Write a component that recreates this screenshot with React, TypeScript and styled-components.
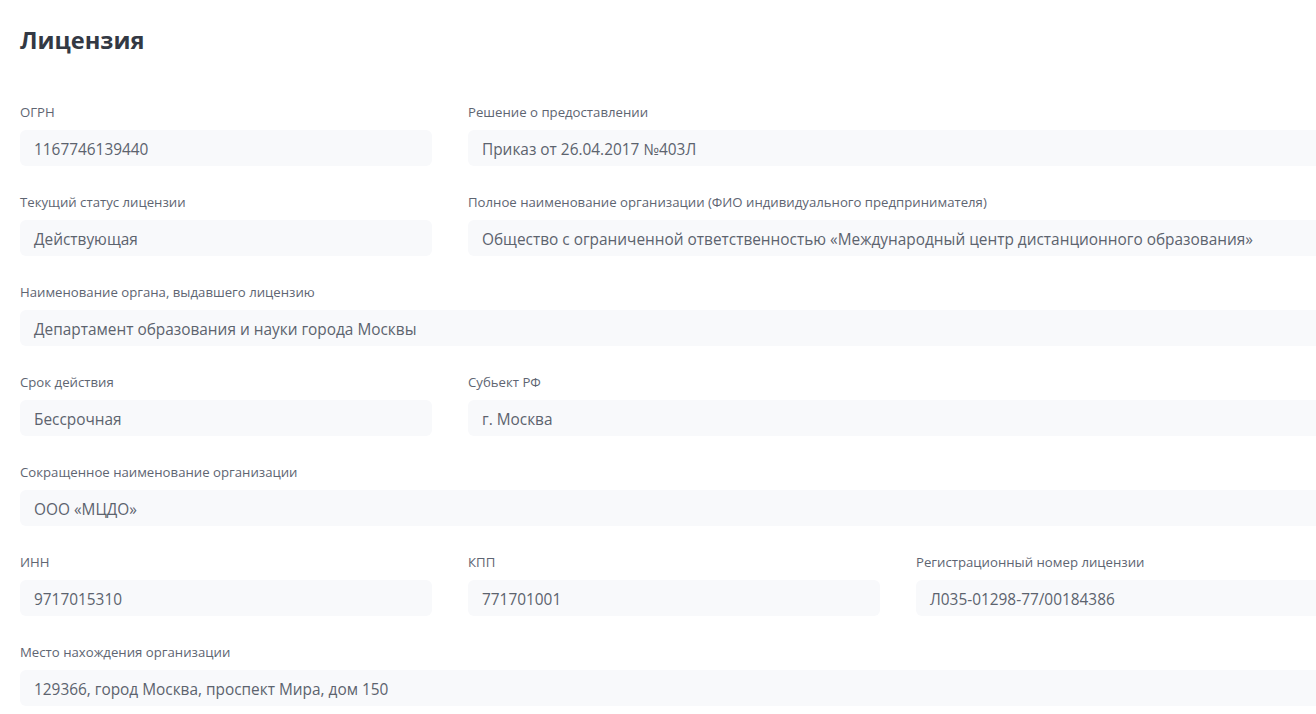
import React from "react";
import styled, { createGlobalStyle } from "styled-components";

const GlobalStyle = createGlobalStyle`
  html, body {
    margin: 0;
    padding: 0;
    background: #ffffff;
    overflow: hidden;
  }
  body {
    font-family: "Open Sans", "Noto Sans", "Liberation Sans", sans-serif;
  }
`;

const Page = styled.div`
  padding: 24px 0 0 20px;
  width: 1308px;
`;

const Title = styled.h1`
  margin: 0 0 47px;
  font-size: 23.6px;
  line-height: 32px;
  font-weight: 700;
  color: #333944;
`;

const Grid = styled.div`
  display: grid;
  grid-template-columns: repeat(3, 412px);
  column-gap: 36px;
  row-gap: 27px;
`;

const Field = styled.div<{ $span: number }>`
  grid-column: span ${(p) => p.$span};
  display: flex;
  flex-direction: column;
  gap: 9px;
`;

const Label = styled.label`
  font-size: 13.2px;
  line-height: 18px;
  color: #5e6572;
`;

const Value = styled.div`
  height: 36px;
  display: flex;
  align-items: center;
  padding: 2px 14px 0;
  box-sizing: border-box;
  border-radius: 6px;
  background: #f8f9fb;
  font-size: 15.4px;
  color: #5c636e;
  white-space: nowrap;
`;

type Item = { label: string; value: string; span: number };

const items: Item[] = [
  { label: "ОГРН", value: "1167746139440", span: 1 },
  { label: "Решение о предоставлении", value: "Приказ от 26.04.2017 №403Л", span: 2 },
  { label: "Текущий статус лицензии", value: "Действующая", span: 1 },
  {
    label: "Полное наименование организации (ФИО индивидуального предпринимателя)",
    value: "Общество с ограниченной ответственностью «Международный центр дистанционного образования»",
    span: 2,
  },
  { label: "Наименование органа, выдавшего лицензию", value: "Департамент образования и науки города Москвы", span: 3 },
  { label: "Срок действия", value: "Бессрочная", span: 1 },
  { label: "Субьект РФ", value: "г. Москва", span: 2 },
  { label: "Сокращенное наименование организации", value: "ООО «МЦДО»", span: 3 },
  { label: "ИНН", value: "9717015310", span: 1 },
  { label: "КПП", value: "771701001", span: 1 },
  { label: "Регистрационный номер лицензии", value: "Л035-01298-77/00184386", span: 1 },
  { label: "Место нахождения организации", value: "129366, город Москва, проспект Мира, дом 150", span: 3 },
];

const App: React.FC = () => {
  return (
    <>
      <GlobalStyle />
      <Page>
        <Title>Лицензия</Title>
        <Grid>
          {items.map((item) => (
            <Field key={item.label} $span={item.span}>
              <Label>{item.label}</Label>
              <Value>{item.value}</Value>
            </Field>
          ))}
        </Grid>
      </Page>
    </>
  );
};

export default App;
